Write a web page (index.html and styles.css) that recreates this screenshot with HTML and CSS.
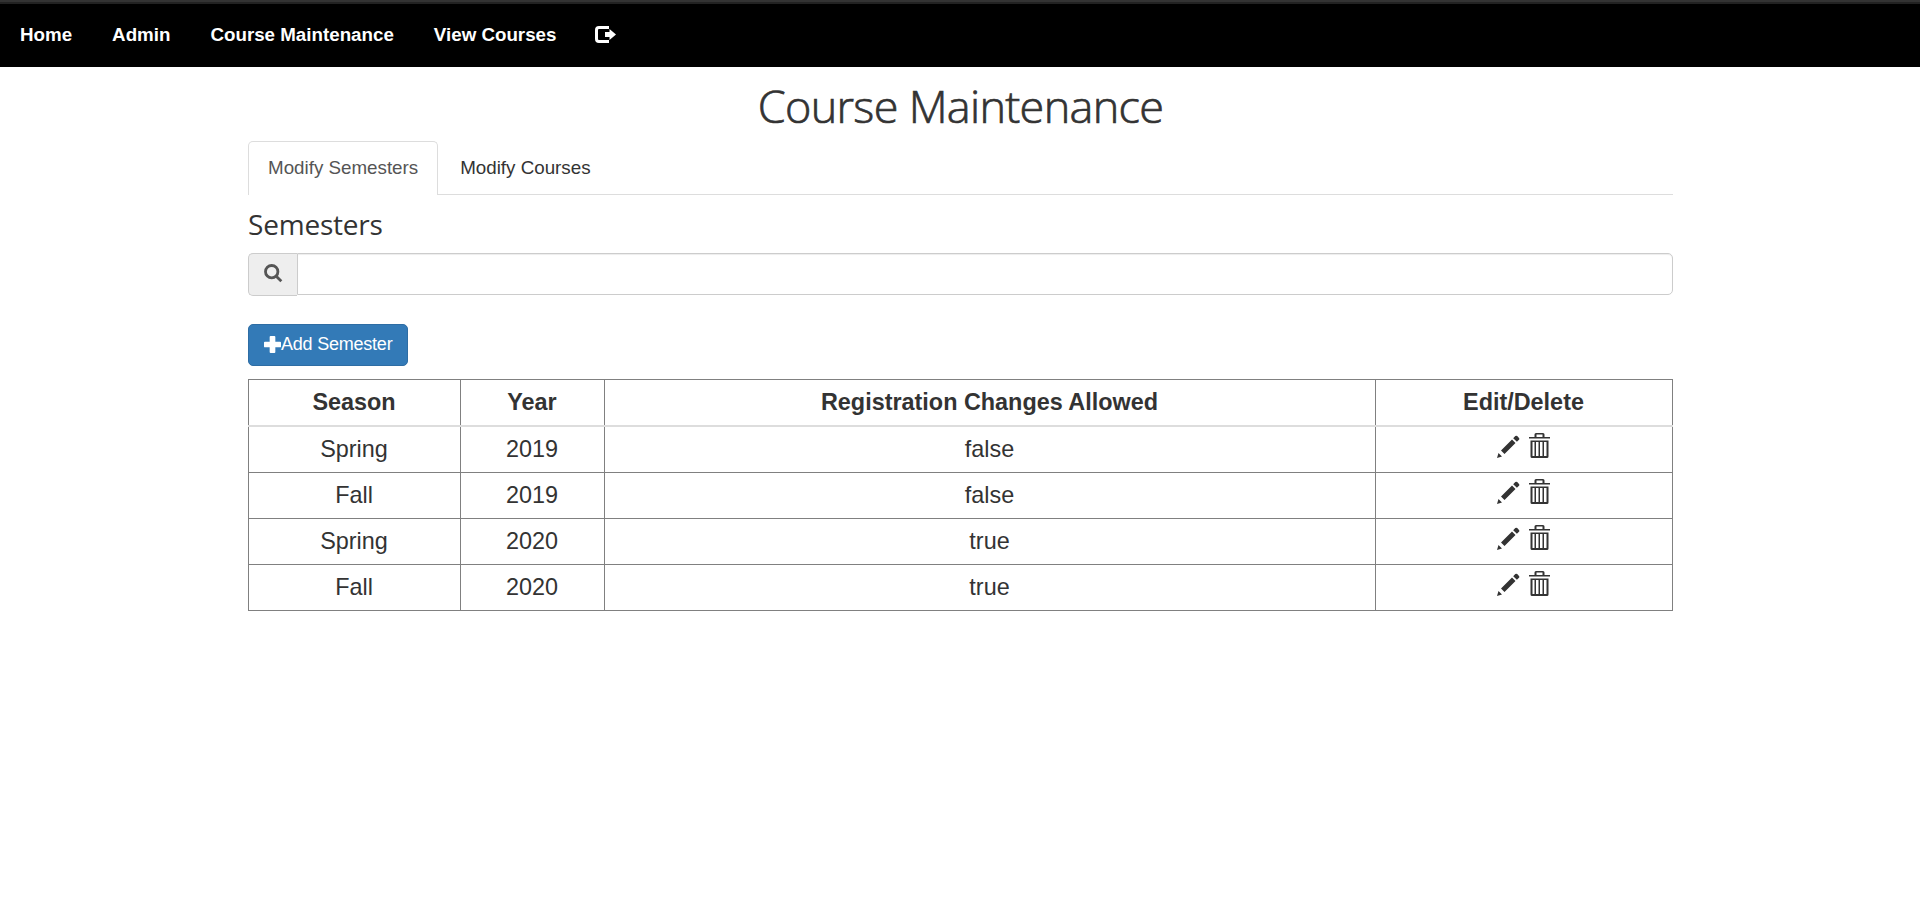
FILE: index.html
```html
<!DOCTYPE html>
<html lang="en">
<head>
<meta charset="utf-8">
<title>Course Maintenance</title>
<link rel="stylesheet" href="styles.css">
</head>
<body>
<svg class="sprite" width="0" height="0">
  <symbol id="pencil" viewBox="0 0 23 23"><path d="M0 23L1.500 18L5 21.500Z M4 15.500L15 4.500L18.500 8L7.500 19Z M16.200 3.200L18.300 1.100Q19.300 .2 20.200 1.100L22 2.900Q22.900 3.800 22 4.700L19.900 6.800Z"/></symbol>
  <symbol id="trash" viewBox="0 0 21 25"><path fill-rule="evenodd" d="M0 4H5.500V1.500Q5.500 0 7 0H14Q15.500 0 15.500 1.500V4H21V5.500H0Z M7.500 4H13.500V1.500H7.500Z M1.500 7.500H19.500V23.500Q19.500 25 18 25H3Q1.500 25 1.500 23.500Z M3.500 9V23H5.500V9Z M7 9V23H9.500V9Z M11 9V23H13.500V9Z M15 9V23H17.500V9Z"/></symbol>
</svg>
<nav class="navbar">
  <a>Home</a><a>Admin</a><a>Course Maintenance</a><a>View Courses</a>
  <a class="logout"><svg width="21" height="17" viewBox="0 0 21 17"><path d="M14 0V3H4Q3 3 3 4V13Q3 14 4 14H14V17H4Q0 17 0 13V4Q0 0 4 0Z M10 6H14.500V3L21 8.500L14.500 14V11H10Z"/></svg></a>
</nav>
<main class="container">
  <h1>Course Maintenance</h1>
  <div class="tabs"><a class="tab active">Modify Semesters</a><a class="tab">Modify Courses</a></div>
  <h2>Semesters</h2>
  <div class="search">
    <span class="addon"><svg width="19" height="19" viewBox="0 0 19 19"><circle cx="7.700" cy="7.700" r="6.200"/><path d="M12 12L17.300 17.300"/></svg></span>
    <input class="field" type="text" aria-label="Search semesters">
  </div>
  <button class="add"><svg width="18" height="18" viewBox="0 0 18 18"><path d="M7 0H11Q12 0 12 1V6H17Q18 6 18 7V11Q18 12 17 12H12V17Q12 18 11 18H7Q6 18 6 17V12H1Q0 12 0 11V7Q0 6 1 6H6V1Q6 0 7 0Z"/></svg><span>Add Semester</span></button>
  <table>
    <colgroup><col class="season"><col class="year"><col class="reg"><col class="edit"></colgroup>
    <thead><tr><th>Season</th><th>Year</th><th>Registration Changes Allowed</th><th>Edit/Delete</th></tr></thead>
    <tbody>
      <tr><td>Spring</td><td>2019</td><td>false</td><td><div class="actions"><svg class="pencil"><use href="#pencil"/></svg><svg class="trash"><use href="#trash"/></svg></div></td></tr>
      <tr><td>Fall</td><td>2019</td><td>false</td><td><div class="actions"><svg class="pencil"><use href="#pencil"/></svg><svg class="trash"><use href="#trash"/></svg></div></td></tr>
      <tr><td>Spring</td><td>2020</td><td>true</td><td><div class="actions"><svg class="pencil"><use href="#pencil"/></svg><svg class="trash"><use href="#trash"/></svg></div></td></tr>
      <tr><td>Fall</td><td>2020</td><td>true</td><td><div class="actions"><svg class="pencil"><use href="#pencil"/></svg><svg class="trash"><use href="#trash"/></svg></div></td></tr>
    </tbody>
  </table>
</main>
</body>
</html>
```
FILE: styles.css
```css
* { box-sizing: border-box; }
body { margin: 0; background: #fff; color: #333; font-family: "Liberation Sans", Arial, sans-serif; }
svg { display: block; fill: currentColor; }
.sprite { display: none; }
.navbar { display: flex; align-items: center; height: 67px; padding-top: 1px; background: #000; border-top: 2px solid #333; box-shadow: inset 0 2px #222; color: #fff; font-weight: bold; font-size: 18.75px; line-height: 24px; }
.navbar a { padding: 0 20px; white-space: nowrap; }
.navbar .logout { padding: 0 19px 2px; }
.container { width: 1425px; margin-left: 248px; }
h1 { margin: 0; padding-top: 8px; height: 74px; text-align: center; font: 300 45px/62px "Open Sans", "Noto Sans", sans-serif; letter-spacing: -.7px; -webkit-text-stroke: .7px #333; }
.tabs { display: flex; height: 54px; border-bottom: 1px solid #ddd; font-size: 18.78px; line-height: 26px; gap: 2px; }
.tab { height: 54px; padding: 13px 19px 0; border: 1px solid transparent; border-bottom: 0; border-radius: 5px 5px 0 0; }
.tab.active { color: #555; background: #fff; border-color: #ddd; }
h2 { margin: 0; height: 58px; padding-top: 9px; font: 400 28px/40px "Open Sans", "Noto Sans", sans-serif; letter-spacing: -.2px; }
.search { display: flex; height: 43px; }
.addon { width: 49px; padding: 10px 0 0 15px; background: #eee; border: 1px solid #ccc; border-right: 0; border-radius: 5px 0 0 5px; color: #555; }
.addon svg { fill: none; stroke: currentColor; stroke-width: 2.8; }
.field { flex: 1; height: 42px; border: 1px solid #ccc; border-radius: 0 5px 5px 0; box-shadow: inset 0 1px 1px rgba(0,0,0,.075); outline: 0; }
.add { display: flex; align-items: center; width: 160px; height: 42px; margin: 28px 0 13px; padding: 0 0 2px 15px; background: #337ab7; border: 1px solid #2e6da4; border-radius: 5px; color: #fff; font: 18px/24px "Liberation Sans", Arial, sans-serif; letter-spacing: -.22px; white-space: nowrap; }
.add svg { width: 17px; height: 17px; }
table { width: 1425px; table-layout: fixed; border-collapse: collapse; font-size: 23.4px; line-height: 28px; text-align: center; }
.season { width: 212px; }
.year { width: 144px; }
.reg { width: 771px; }
.edit { width: 297px; }
th, td { height: 46px; padding: 0 1px 1px 0; border: 1px solid #808080; }
th { border-bottom: 2px solid #ddd; }
tbody tr:first-child td { height: 47px; }
.actions { display: flex; justify-content: center; gap: 9px; padding: 0 1px 7px 0; }
.pencil { width: 23px; height: 23px; margin-top: 2px; }
.trash { width: 21px; height: 25px; }
```
